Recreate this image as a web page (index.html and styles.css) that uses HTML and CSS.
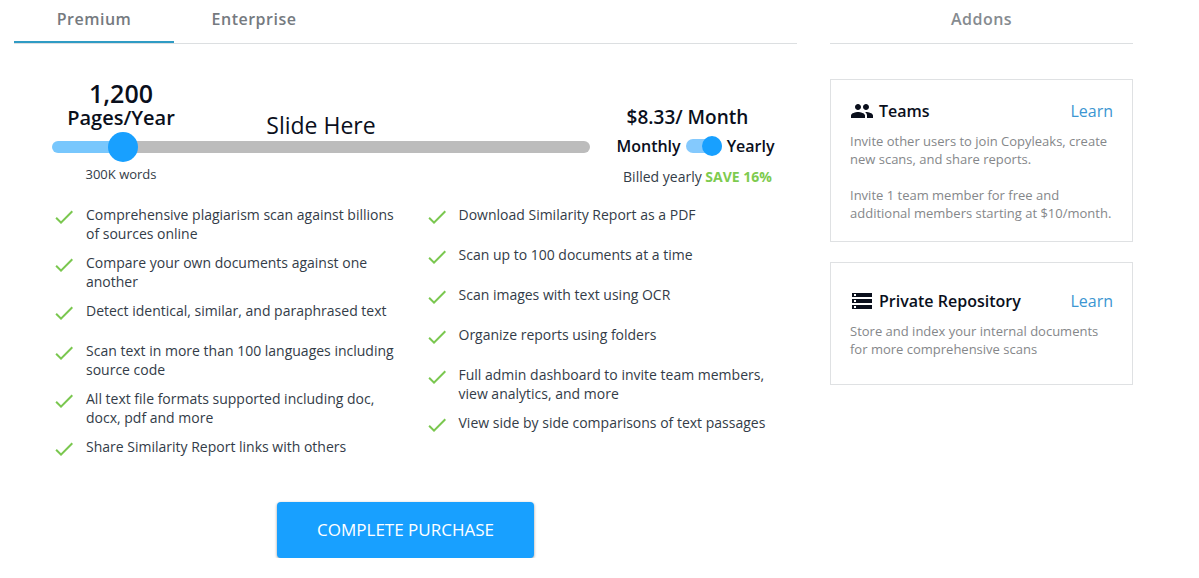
FILE: index.html
```
<!DOCTYPE html>
<html lang="en">
<head>
    <meta charset="UTF-8">
    <meta name="viewport" content="width=device-width, initial-scale=1.0">
    <title>Pricing</title>
    <link rel="stylesheet" href="styles.css">
</head>
<body>
    <!-- shared icon shapes -->
    <svg class="sprite" aria-hidden="true">
        <symbol id="check" viewBox="0 0 24 24">
            <path d="M9 16.17L4.83 12l-1.42 1.41L9 19 21 7l-1.41-1.41z"/>
        </symbol>
        <symbol id="group" viewBox="0 0 24 24">
            <path d="M16 11c1.66 0 2.99-1.34 2.99-3S17.66 5 16 5c-1.66 0-3 1.34-3 3s1.34 3 3 3zm-8 0c1.66 0 2.99-1.34 2.99-3S9.66 5 8 5C6.34 5 5 6.34 5 8s1.34 3 3 3zm0 2c-2.33 0-7 1.17-7 3.5V19h14v-2.5c0-2.33-4.67-3.5-7-3.5zm8 0c-.29 0-.62.02-.97.05 1.16.84 1.97 1.97 1.97 3.45V19h6v-2.5c0-2.33-4.67-3.5-7-3.5z"/>
        </symbol>
        <symbol id="storage" viewBox="0 0 24 24">
            <path d="M2 20h20v-4H2v4zm2-3h2v2H4v-2zM2 4v4h20V4H2zm4 3H4V5h2v2zm-4 7h20v-4H2v4zm2-3h2v2H4v-2z"/>
        </symbol>
    </svg>

    <div class="pricing">
        <main class="plans">
            <div class="tabs" role="tablist">
                <button class="tab active" role="tab" aria-selected="true">Premium</button>
                <button class="tab" role="tab" aria-selected="false">Enterprise</button>
            </div>

            <div class="plan">
                <div class="plan-top">
                    <div class="pages">
                        <div class="pages-head">
                            <label class="pages-count" for="pages"><strong>1,200</strong>Pages/Year</label>
                            <span class="slide-here">Slide Here</span>
                        </div>
                        <input class="slider" id="pages" type="range" min="0" max="100" value="11">
                        <div class="words">300K words</div>
                    </div>

                    <div class="price">
                        <div class="price-amount">$8.33/ Month</div>
                        <div class="period">
                            <label for="yearly">Monthly</label>
                            <input class="toggle" id="yearly" type="checkbox" checked>
                            <label for="yearly">Yearly</label>
                        </div>
                        <div class="billed">Billed yearly <b>SAVE 16%</b></div>
                    </div>
                </div>

                <div class="features">
                    <ul>
                        <li><svg class="icon"><use href="#check"/></svg><span>Comprehensive plagiarism scan against billions of sources online</span></li>
                        <li><svg class="icon"><use href="#check"/></svg><span>Compare your own documents against one another</span></li>
                        <li><svg class="icon"><use href="#check"/></svg><span>Detect identical, similar, and paraphrased text</span></li>
                        <li><svg class="icon"><use href="#check"/></svg><span>Scan text in more than 100 languages including source code</span></li>
                        <li><svg class="icon"><use href="#check"/></svg><span>All text file formats supported including doc, docx, pdf and more</span></li>
                        <li><svg class="icon"><use href="#check"/></svg><span>Share Similarity Report links with others</span></li>
                    </ul>
                    <ul>
                        <li><svg class="icon"><use href="#check"/></svg><span>Download Similarity Report as a PDF</span></li>
                        <li><svg class="icon"><use href="#check"/></svg><span>Scan up to 100 documents at a time</span></li>
                        <li><svg class="icon"><use href="#check"/></svg><span>Scan images with text using OCR</span></li>
                        <li><svg class="icon"><use href="#check"/></svg><span>Organize reports using folders</span></li>
                        <li><svg class="icon"><use href="#check"/></svg><span>Full admin dashboard to invite team members, view analytics, and more</span></li>
                        <li><svg class="icon"><use href="#check"/></svg><span>View side by side comparisons of text passages</span></li>
                    </ul>
                </div>
            </div>

            <button class="purchase">COMPLETE PURCHASE</button>
        </main>

        <aside class="addons">
            <h2>Addons</h2>

            <section class="card">
                <div class="card-head">
                    <svg class="icon"><use href="#group"/></svg>
                    <h3>Teams</h3>
                    <a href="#">Learn</a>
                </div>
                <p>Invite other users to join Copyleaks, create new scans, and share reports.</p>
                <p>Invite 1 team member for free and additional members starting at $10/month.</p>
            </section>

            <section class="card">
                <div class="card-head">
                    <svg class="icon"><use href="#storage"/></svg>
                    <h3>Private Repository</h3>
                    <a href="#">Learn</a>
                </div>
                <p>Store and index your internal documents for more comprehensive scans</p>
            </section>
        </aside>
    </div>
</body>
</html>
```

FILE: styles.css
```
* {
    margin: 0;
    padding: 0;
    box-sizing: border-box;
}

body {
    font-family: "Open Sans", sans-serif;
    font-size: 14px;
    background-color: #fff;
    color: #333c48;
}

button,
input {
    font-family: inherit;
}

.sprite {
    display: none;
}

.icon {
    width: 24px;
    height: 24px;
    flex: none;
    fill: currentColor;
}

.pricing {
    display: flex;
    gap: 33px;
    padding: 0 66px 0 14px;
}

.plans {
    flex: 783 1 0;
    min-width: 0;
    display: flex;
    flex-direction: column;
}

.addons {
    flex: 303 1 0;
    min-width: 0;
}

/* Tabs */
.tabs {
    display: flex;
    height: 44px;
    border-bottom: 1px solid #dcdfe1;
}

.tab {
    width: 160px;
    padding-bottom: 3px;
    border: none;
    border-bottom: 2px solid transparent;
    background: none;
    font-size: 16px;
    font-weight: 600;
    letter-spacing: 0.5px;
    color: #757a80;
    cursor: pointer;
}

.tab.active {
    border-bottom-color: #2f9bc4;
}

/* Pages slider and price */
.plan {
    padding-left: 38px;
}

.plan-top {
    display: flex;
    margin-top: 37px;
}

.pages {
    flex: 538 1 0;
}

.pages-head {
    display: grid;
    grid-template-columns: 1fr auto 1fr;
    align-items: end;
}

.pages-count {
    width: 138px;
    font-size: 20px;
    font-weight: 600;
    line-height: 24px;
    text-align: center;
    color: #0a0f1c;
}

.pages-count strong {
    display: block;
    font-size: 25px;
    font-weight: 600;
    line-height: 25px;
}

.slide-here {
    font-size: 23px;
    font-weight: 500;
    line-height: 30px;
    margin-bottom: -10px;
    color: #0a0f1c;
}

.slider {
    display: block;
    appearance: none;
    width: 100%;
    height: 30px;
    margin-top: 2px;
    background: transparent;
    cursor: pointer;
}

.slider::-webkit-slider-runnable-track {
    height: 12px;
    border-radius: 6px;
    background: linear-gradient(to right, #78c7fd 13%, #bcbcbc 13%);
}

.slider::-webkit-slider-thumb {
    appearance: none;
    width: 30px;
    height: 30px;
    margin-top: -9px;
    border-radius: 50%;
    background-color: #18a0ff;
}

.words {
    width: 138px;
    font-size: 13px;
    line-height: 24px;
    text-align: center;
}

.price {
    flex: 203 1 0;
    padding-top: 23px;
    padding-left: 4px;
    text-align: center;
}

.price-amount {
    padding-right: 16px;
    font-size: 19px;
    font-weight: 600;
    line-height: 26px;
    color: #0a0f1c;
}

.period {
    display: flex;
    align-items: center;
    justify-content: center;
    gap: 5px;
    font-size: 16px;
    font-weight: 600;
    line-height: 32px;
    color: #0a0f1c;
}

.toggle {
    appearance: none;
    position: relative;
    width: 36px;
    height: 14px;
    border-radius: 7px;
    background-color: #84c9fd;
    cursor: pointer;
}

.toggle::before {
    content: "";
    position: absolute;
    top: -3px;
    right: 0;
    width: 20px;
    height: 20px;
    border-radius: 50%;
    background-color: #18a0ff;
}

.billed {
    padding-left: 4px;
    line-height: 30px;
}

.billed b {
    color: #7ecb4f;
}

/* Features */
.features {
    display: grid;
    grid-template-columns: 1fr 1fr;
    margin-top: 13px;
}

.features ul {
    list-style: none;
}

.features li {
    display: flex;
    gap: 10px;
    min-height: 30px;
    margin-bottom: 10px;
    padding-right: 20px;
    line-height: 19px;
}

.features .icon {
    color: #7ac74f;
}

.purchase {
    align-self: center;
    height: 56px;
    margin-top: 25px;
    padding: 0 40px 2px;
    border: none;
    border-radius: 4px;
    background-color: #18a0ff;
    box-shadow: 0 1px 3px rgba(0, 0, 0, 0.4);
    font-size: 17px;
    color: #fff;
    cursor: pointer;
}

/* Addons */
.addons h2 {
    height: 44px;
    padding-bottom: 5px;
    border-bottom: 1px solid #dcdfe1;
    font-size: 16px;
    font-weight: 600;
    letter-spacing: 0.5px;
    line-height: 38px;
    text-align: center;
    color: #868b90;
}

.card {
    display: flex;
    flex-direction: column;
    justify-content: center;
    min-height: 123px;
    margin-top: 20px;
    padding: 19px;
    border: 1px solid #dfe1e3;
}

.addons h2 + .card {
    margin-top: 35px;
}

.card-head {
    display: flex;
    align-items: center;
    gap: 5px;
    margin-bottom: 9px;
    color: #0a0f1c;
}

.card-head h3 {
    flex: 1;
    font-size: 16px;
    font-weight: 600;
    line-height: 24px;
}

.card-head a {
    font-size: 16px;
    line-height: 24px;
    color: #3c96d2;
    text-decoration: none;
}

.card p {
    font-size: 13px;
    line-height: 18px;
    color: #85878a;
}

.card p + p {
    margin-top: 18px;
}
```
